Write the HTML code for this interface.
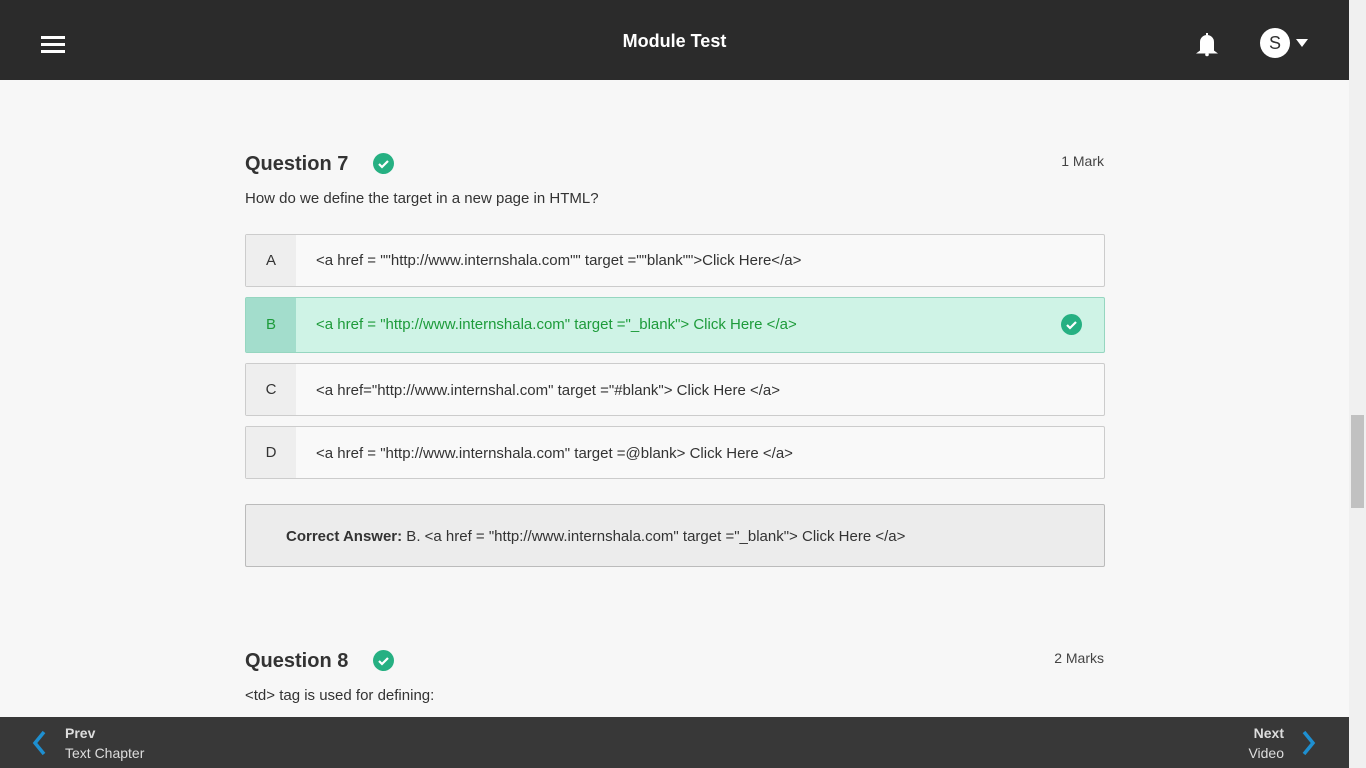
<!DOCTYPE html>
<html><head><meta charset="utf-8"><style>
*{box-sizing:border-box;margin:0;padding:0}
body{width:1366px;height:768px;overflow:hidden;background:#f7f7f7;font-family:"Liberation Sans",sans-serif;color:#333;position:relative}
.top{position:absolute;left:0;top:0;width:1349px;height:80px;background:#2b2b2b}
.ham{position:absolute;left:41px;width:24px;height:3px;background:#fff}
.title{position:absolute;left:0;width:1349px;top:31px;text-align:center;color:#fff;font-size:18px;font-weight:bold}
.sb{position:absolute;left:1349px;top:0;width:17px;height:768px;background:#f0f0f0}
.thumb{position:absolute;left:1351px;top:415px;width:13px;height:93px;background:#c1c1c1}
.q{position:absolute;left:245px;font-size:20px;font-weight:bold;color:#333}
.chk{position:absolute;width:21px;height:21px;border-radius:50%;background:#26b082}
.chk svg{position:absolute;left:0;top:0}
.mark{position:absolute;right:262px;font-size:14px;color:#444}
.qt{position:absolute;left:245px;font-size:15px;color:#333}
.opt{position:absolute;left:245px;width:860px;border:1px solid #ccc;border-radius:2px;background:#f9f9f9;font-size:15px;color:#333}
.opt .l{position:absolute;left:0;top:0;bottom:0;width:50px;background:#eee;text-align:center}
.opt .t{position:absolute;left:70px}
.opt.g{background:#cff3e6;border-color:#96d6c0;color:#1d9b3a}
.opt.g .l{background:#a3ddcc}
.ans{position:absolute;left:245px;top:504px;width:860px;height:63px;background:#ececec;border:1px solid #bbb;border-radius:2px;font-size:15px;padding:22px 0 0 40px;color:#333}
.foot{position:absolute;left:0;top:717px;width:1349px;height:51px;background:#383838;color:#ddd;font-size:14px}
</style></head><body>
<div class="top">
<div class="ham" style="top:36px"></div><div class="ham" style="top:43px"></div><div class="ham" style="top:50px"></div>
<div class="title">Module Test</div>
<svg style="position:absolute;left:1196px;top:31px" width="22" height="26" viewBox="0 0 22 26"><path d="M11 2v2M5 20V11a6 6 0 0 1 12 0v9l2 1.5H3z" fill="#fff" stroke="#fff" stroke-width="2"/><circle cx="11" cy="23.5" r="1.8" fill="#fff"/></svg>
<div style="position:absolute;left:1260px;top:28px;width:30px;height:30px;border-radius:50%;background:#fff;color:#333;font-size:18px;text-align:center;line-height:30px">S</div>
<div style="position:absolute;left:1296px;top:39px;width:0;height:0;border-left:6px solid transparent;border-right:6px solid transparent;border-top:8px solid #fff"></div>
</div>
<div class="sb"></div><div class="thumb"></div>

<div class="q" style="top:153px">Question 7</div>
<div class="chk" style="left:373px;top:153px"><svg width="21" height="21"><path d="M6 11l3 3 6-6" fill="none" stroke="#fff" stroke-width="2.2"/></svg></div>
<div class="mark" style="top:153px">1 Mark</div>
<div class="qt" style="top:190px">How do we define the target in a new page in HTML?</div>

<div class="opt" style="top:234px;height:53px"><div class="l" style="line-height:51px">A</div><div class="t" style="top:17px">&lt;a href = ""http://www.internshala.com"" target =""blank""&gt;Click Here&lt;/a&gt;</div></div>
<div class="opt g" style="top:297px;height:56px"><div class="l" style="line-height:54px">B</div><div class="t" style="top:18px">&lt;a href = "http://www.internshala.com" target ="_blank"&gt; Click Here &lt;/a&gt;</div>
<div class="chk" style="left:815px;top:16px"><svg width="21" height="21"><path d="M6 11l3 3 6-6" fill="none" stroke="#fff" stroke-width="2.2"/></svg></div></div>
<div class="opt" style="top:363px;height:53px"><div class="l" style="line-height:51px">C</div><div class="t" style="top:18px">&lt;a href="http://www.internshal.com" target ="#blank"&gt; Click Here &lt;/a&gt;</div></div>
<div class="opt" style="top:426px;height:53px"><div class="l" style="line-height:51px">D</div><div class="t" style="top:18px">&lt;a href = "http://www.internshala.com" target =@blank&gt; Click Here &lt;/a&gt;</div></div>

<div class="ans" style="padding-top:23px"><b>Correct Answer:</b> B. &lt;a href = "http://www.internshala.com" target ="_blank"&gt; Click Here &lt;/a&gt;</div>

<div class="q" style="top:650px">Question 8</div>
<div class="chk" style="left:373px;top:650px"><svg width="21" height="21"><path d="M6 11l3 3 6-6" fill="none" stroke="#fff" stroke-width="2.2"/></svg></div>
<div class="mark" style="top:650px">2 Marks</div>
<div class="qt" style="top:687px">&lt;td&gt; tag is used for defining:</div>

<div class="foot">
<svg style="position:absolute;left:31px;top:13px" width="16" height="26"><path d="M13 2L4 13l9 11" fill="none" stroke="#1e8fd0" stroke-width="3.5"/></svg>
<div style="position:absolute;left:65px;top:8px;font-weight:bold">Prev</div>
<div style="position:absolute;left:65px;top:28px">Text Chapter</div>
<div style="position:absolute;right:65px;top:8px;font-weight:bold">Next</div>
<div style="position:absolute;right:65px;top:28px">Video</div>
<svg style="position:absolute;left:1301px;top:13px" width="16" height="26"><path d="M3 2l9 11-9 11" fill="none" stroke="#1e8fd0" stroke-width="3.5"/></svg>
</div>
</body></html>
